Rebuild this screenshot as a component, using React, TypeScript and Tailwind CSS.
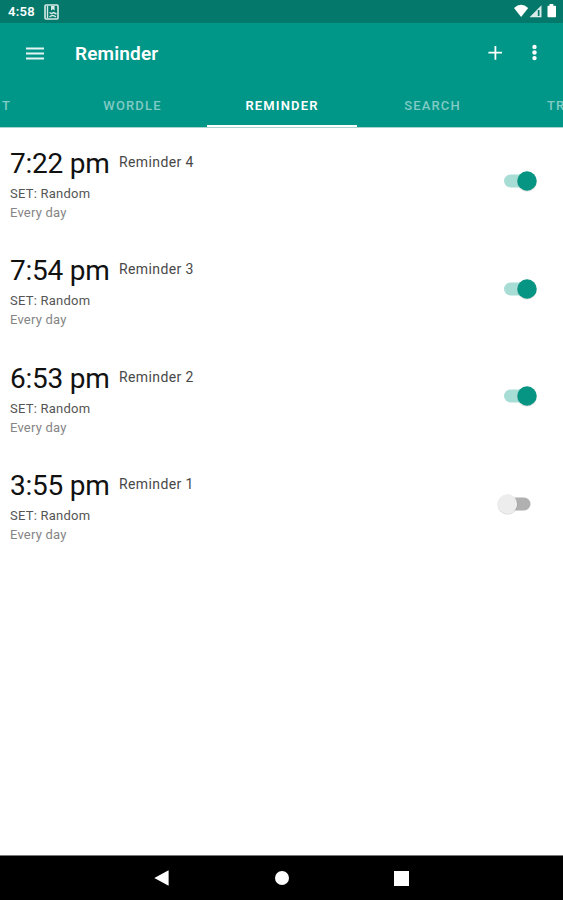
import React from "react";

type Reminder = { time: string; name: string; on: boolean };

const reminders: Reminder[] = [
  { time: "7:22 pm", name: "Reminder 4", on: true },
  { time: "7:54 pm", name: "Reminder 3", on: true },
  { time: "6:53 pm", name: "Reminder 2", on: true },
  { time: "3:55 pm", name: "Reminder 1", on: false },
];

function StatusBar() {
  return (
    <div className="flex h-[23px] shrink-0 items-center bg-[#04786b] pl-2 text-white">
      <span className="w-[36px] text-[13px] leading-[23px] font-semibold tracking-[0.3px] whitespace-nowrap">4:58</span>
      <svg width="15" height="16" viewBox="0 0 15 16" fill="none" stroke="#d8eae6">
        <rect x="1" y="1" width="13" height="14" rx="1" strokeWidth="1.600" />
        <path d="M3.500 2v12" strokeWidth="1.400" />
        <path d="M7 2v4.500l1.800-1.200 1.800 1.200V2z" fill="#d8eae6" stroke="none" />
        <path d="M5.500 8.500l2 1.200 2-1.200 3 1.500M5.500 13q3-3 6.500 0" strokeWidth="1.400" />
      </svg>
      <svg className="ml-auto" width="50" height="23" viewBox="0 0 50 23" fill="#fff">
        <path d="M1 8q7-6.500 14.200 0L8.100 17z" />
        <path d="M16.500 17.300L28.500 5.300v12z" fillOpacity=".85" />
        <path d="M24.800 10h1.700v6h-1.700z" fill="#04786b" />
        <path d="M35.200 5.700h1.300V4h3.800v1.700H42.300q.7 0 .7.700v10.200q0 .7-.7.700h-7.100q-.7 0-.7-.7V6.400q0-.7.7-.7z" />
      </svg>
    </div>
  );
}

function Toolbar() {
  return (
    <header className="flex h-[61px] shrink-0 items-center pl-[26px] text-white">
      <svg width="18" height="13" viewBox="0 0 18 13" stroke="#e6f5f3" strokeWidth="2.200">
        <path d="M0 1.500h18M0 6.500h18M0 11.500h18" />
      </svg>
      <h1 className="ml-[31px] text-[19px] leading-6 font-semibold tracking-[0.150px]">Reminder</h1>
      <svg className="mb-[2px] ml-auto" width="14" height="14" viewBox="0 0 14 14" stroke="#fff" strokeWidth="1.800">
        <path d="M.4 6.700h14M7.400-.3v14" />
      </svg>
      <svg className="mr-[26px] mb-[2px] ml-[30px]" width="5" height="17" viewBox="0 0 5 17" fill="#fff">
        <circle cx="2.500" cy="2.900" r="2.200" />
        <circle cx="2.500" cy="8.500" r="2.200" />
        <circle cx="2.500" cy="14.100" r="2.200" />
      </svg>
    </header>
  );
}

function Tabs() {
  const tabs = ["WORDLE", "REMINDER", "SEARCH"];
  return (
    <nav className="flex h-[44px] shrink-0 overflow-hidden border-b border-[#a9d3ce] text-[13px] leading-[43px] font-medium tracking-[1.150px] text-[#80cbc4]">
      <div className="flex w-[57px] shrink-0 justify-start pl-[2px]">T</div>
      {tabs.map((tab) => (
        <div
          key={tab}
          className={
            tab === "REMINDER"
              ? "-mb-px box-border h-[44px] w-[150px] shrink-0 border-b-[3px] border-white text-center font-semibold text-white"
              : "w-[150px] shrink-0 pl-px text-center"
          }
        >
          {tab}
        </div>
      ))}
      <div className="shrink-0 pl-[40px] whitespace-nowrap">TR</div>
    </nav>
  );
}

function Toggle({ on }: { on: boolean }) {
  return (
    <svg width="50" height="28" viewBox="0 0 50 28" role="switch" aria-checked={on}>
      <rect x="11" y="7.500" width="26.500" height="13" rx="6.500" fill={on ? "#a8ddd6" : "#b0b0b0"} />
      <circle cx={on ? 34 : 14.500} cy="14.600" r="10.100" fill="#000" fillOpacity=".12" />
      <circle cx={on ? 34 : 14.500} cy="14" r="9.700" fill={on ? "#079583" : "#ededed"} />
    </svg>
  );
}

function ReminderRow({ time, name, on }: Reminder) {
  return (
    <li className="flex h-[107.500px] items-start justify-between pr-[20px] pl-[10px]">
      <div className="pt-[18px]">
        <div className="flex items-start">
          <span className="w-[109px] text-[28px] leading-[34px] tracking-[-0.250px] whitespace-nowrap text-[#111]">
            {time}
          </span>
          <span className="text-[14px] leading-[31px] tracking-[0.4px] text-[#484848]">{name}</span>
        </div>
        <div className="mt-[3.400px] text-[13px] leading-[20px] tracking-[0.230px] text-[#555]">SET: Random</div>
        <div className="text-[13px] leading-[18px] tracking-[0.2px] text-[#858585]">Every day</div>
      </div>
      <div className="pt-[38.800px]">
        <Toggle on={on} />
      </div>
    </li>
  );
}

function NavigationBar() {
  return (
    <footer className="flex h-[45px] shrink-0 items-center border-t border-[#777] bg-black pl-[154px]">
      <svg width="15" height="16" viewBox="0 0 15 16" fill="#fff">
        <path d="M.3 8L14.600.2v15.600z" />
      </svg>
      <span className="ml-[106px] h-[14px] w-[14px] rounded-full bg-white" />
      <span className="ml-[105px] h-[15px] w-[15px] bg-white" />
    </footer>
  );
}

export default function App() {
  return (
    <div className="flex h-[900px] w-[563px] flex-col overflow-hidden bg-white font-['Roboto','Noto_Sans',sans-serif]">
      <StatusBar />
      <div className="flex shrink-0 flex-col bg-[#009688]">
        <Toolbar />
        <Tabs />
      </div>
      <ul className="min-h-0 flex-1 pt-[0.600px]">
        {reminders.map((r) => (
          <ReminderRow key={r.name} {...r} />
        ))}
      </ul>
      <NavigationBar />
    </div>
  );
}
